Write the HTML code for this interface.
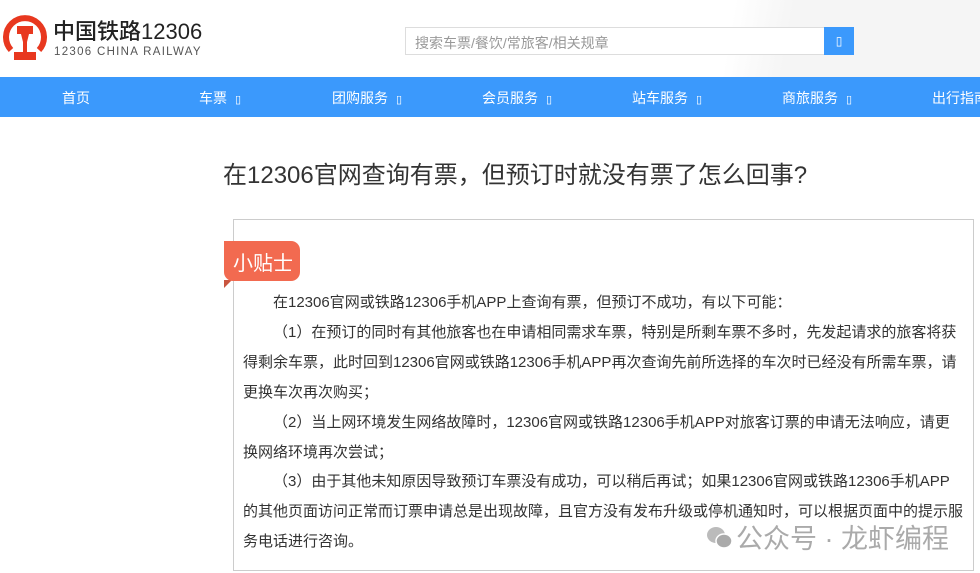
<!DOCTYPE html>
<html><head><meta charset="utf-8"><style>
*{margin:0;padding:0;box-sizing:border-box}
body{width:980px;height:573px;overflow:hidden;background:#fff;font-family:"Liberation Sans","Noto Sans CJK SC",sans-serif;color:#333;position:relative}
.hdr{position:absolute;left:0;top:0;width:980px;height:77px;background:linear-gradient(100deg,#fff 0%,#fff 74%,#f5f5f5 80%,#f5f5f5 100%)}
.logo{position:absolute;left:3px;top:12px}
.t1{position:absolute;left:53px;top:14px;font-size:22px;color:#222;font-weight:500}
.t2{position:absolute;left:54px;top:46px;font-size:11.5px;color:#555;letter-spacing:1.3px}
.search{position:absolute;left:405px;top:27px;width:420px;height:28px;border:1px solid #ddd;background:#fff;font-size:14px;color:#999;padding:5px 9px}
.sbtn{position:absolute;left:824px;top:27px;width:30px;height:28px;background:#3b99fc;color:#fff;font-size:12px;text-align:center;line-height:28px}
.nav{position:absolute;left:0;top:77px;width:980px;height:40px;background:#3b99fc;color:#fff;font-size:14px}
.nav span{position:absolute;top:11px;white-space:nowrap}
.nav i{font-style:normal;font-size:11px;margin-left:8px}
h1{position:absolute;left:223px;top:155px;font-size:24px;font-weight:normal;color:#333;white-space:nowrap}
.box{position:absolute;left:233px;top:219px;width:741px;height:352px;border:1px solid #ccc}
.tag{position:absolute;left:224px;top:241px;width:76px;height:40px;background:#f26a50;border-radius:0 9px 9px 9px;color:#fff;font-size:20px;padding:6px 0 0 9px}
.tri{position:absolute;left:224px;top:280px;width:0;height:0;border-left:8px solid #c9553f;border-bottom:8px solid transparent}
.txt{position:absolute;left:243px;top:288px;width:730px;font-size:15px;line-height:29.9px;color:#333;white-space:nowrap}
.in{padding-left:2em}
.wm{position:absolute;left:736px;top:517px;font-size:27px;color:#aaa;white-space:nowrap}
.wc{position:absolute;left:706px;top:526px}
</style></head><body>
<div class="hdr"></div>
<svg class="logo" width="44" height="50" viewBox="0 0 44 50">
<path d="M8 38 A19 19 0 1 1 36 38" fill="none" stroke="#e8381f" stroke-width="6"/>
<path d="M14 14 H30 V22 H26 L24 30 V40 H33 V48 H11 V40 H20 V30 L18 22 H14 Z" fill="#e8381f"/>
</svg>
<div class="t1">中国铁路12306</div>
<div class="t2">12306 CHINA RAILWAY</div>
<div class="search">搜索车票/餐饮/常旅客/相关规章</div>
<div class="sbtn">▯</div>
<div class="nav">
<span style="left:62px">首页</span>
<span style="left:199px">车票<i>▯</i></span>
<span style="left:332px">团购服务<i>▯</i></span>
<span style="left:482px">会员服务<i>▯</i></span>
<span style="left:632px">站车服务<i>▯</i></span>
<span style="left:782px">商旅服务<i>▯</i></span>
<span style="left:932px">出行指南</span>
</div>
<h1>在12306官网查询有票，但预订时就没有票了怎么回事?</h1>
<div class="box"></div>
<div class="tri"></div>
<div class="tag">小贴士</div>
<div class="txt">
<div class="in">在12306官网或铁路12306手机APP上查询有票，但预订不成功，有以下可能：</div>
<div class="in">（1）在预订的同时有其他旅客也在申请相同需求车票，特别是所剩车票不多时，先发起请求的旅客将获</div>
<div>得剩余车票，此时回到12306官网或铁路12306手机APP再次查询先前所选择的车次时已经没有所需车票，请</div>
<div>更换车次再次购买；</div>
<div class="in">（2）当上网环境发生网络故障时，12306官网或铁路12306手机APP对旅客订票的申请无法响应，请更</div>
<div>换网络环境再次尝试；</div>
<div class="in">（3）由于其他未知原因导致预订车票没有成功，可以稍后再试；如果12306官网或铁路12306手机APP</div>
<div>的其他页面访问正常而订票申请总是出现故障，且官方没有发布升级或停机通知时，可以根据页面中的提示服</div>
<div>务电话进行咨询。</div>
</div>
<svg class="wc" width="28" height="24" viewBox="0 0 28 24"><ellipse cx="10" cy="9" rx="9" ry="8" fill="#bbb"/><ellipse cx="18" cy="15" rx="8" ry="7" fill="#aaa" stroke="#fff" stroke-width="1.5"/></svg>
<div class="wm">公众号 · 龙虾编程</div>
</body></html>
